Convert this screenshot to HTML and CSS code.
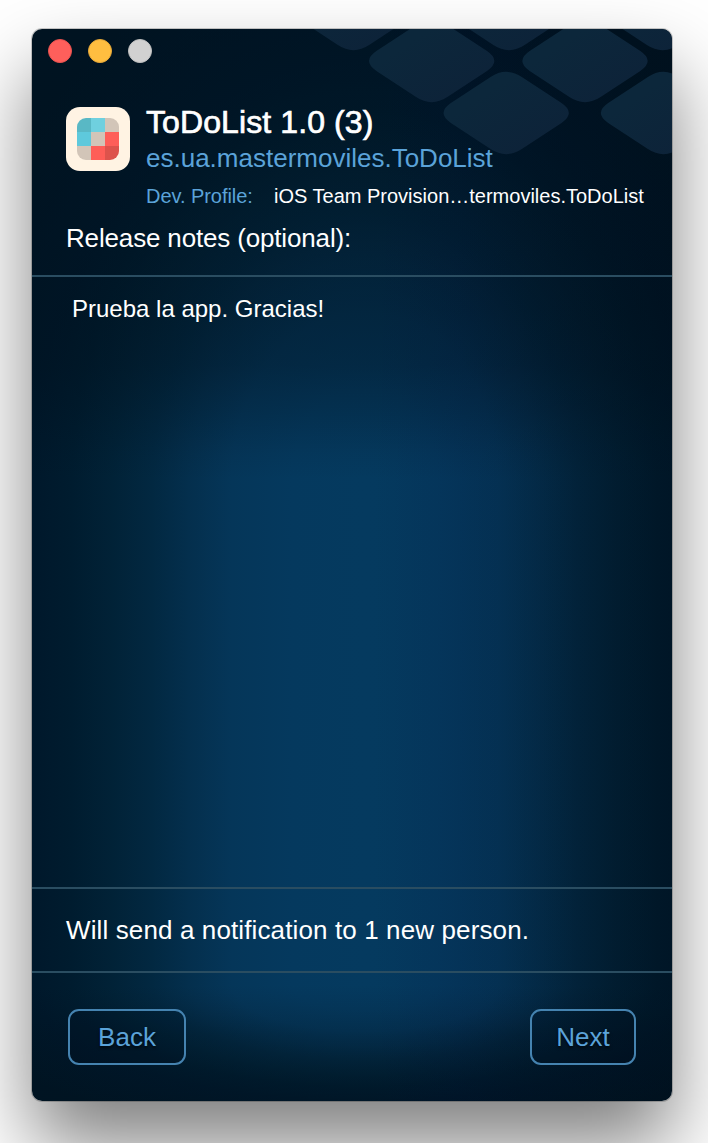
FILE: index.html
```html
<!DOCTYPE html>
<html lang="en">
<head>
<meta charset="utf-8">
<title>ToDoList 1.0 (3)</title>
<link rel="stylesheet" href="styles.css">
</head>
<body>
<main class="window">
  <svg class="pattern" width="370" height="130" viewBox="-40 0 370 130" aria-hidden="true">
    <defs>
      <linearGradient id="tile-fill" x1="0" y1="0" x2="1" y2="1">
        <stop offset="0.3" stop-color="#0c273b"/>
        <stop offset="0.8" stop-color="#0d2339"/>
      </linearGradient>
      <path id="tile" d="M-55.3 -9.9L-15.6 -36Q0 -46.3 15.6 -36L55.3 -9.9Q70 0 55.3 9.9L15.6 36Q0 46.3 -15.6 36L-55.3 9.9Q-70 0 -55.3 -9.9Z" fill="url(#tile-fill)"/>
    </defs>
    <use href="#tile" x="11.5" y="-20"/>
    <use href="#tile" x="167" y="-20"/>
    <use href="#tile" x="320.5" y="-20"/>
    <use href="#tile" x="89.7" y="32"/>
    <use href="#tile" x="243" y="32"/>
    <use href="#tile" x="164.2" y="84"/>
    <use href="#tile" x="321.5" y="84"/>
  </svg>

  <div class="titlebar">
    <span class="light light-close"></span>
    <span class="light light-minimize"></span>
    <span class="light light-zoom"></span>
  </div>

  <header class="header">
    <div class="app">
      <div class="app-icon">
        <div class="app-grid">
          <i class="teal-dark"></i><i class="teal-light"></i><i class="sand"></i>
          <i class="teal"></i><i class="sand"></i><i class="red"></i>
          <i class="sand"></i><i class="red"></i><i class="red-dark"></i>
        </div>
      </div>
      <div class="app-info">
        <h1 class="app-title">ToDoList 1.0 (3)</h1>
        <p class="bundle">es.ua.mastermoviles.ToDoList</p>
        <p class="profile"><span class="profile-label">Dev. Profile:</span><span class="profile-value">iOS Team Provision…termoviles.ToDoList</span></p>
      </div>
    </div>
    <h2 class="notes-label">Release notes (optional):</h2>
  </header>

  <section class="notes">Prueba la app. Gracias!</section>
  <p class="status">Will send a notification to 1 new person.</p>

  <footer class="footer">
    <button class="button button-back">Back</button>
    <button class="button button-next">Next</button>
  </footer>
</main>
</body>
</html>
```

FILE: styles.css
```css
* {
  box-sizing: border-box;
  margin: 0;
  padding: 0;
}

body {
  height: 1143px;
  padding: 29px 36px 42px 32px;
  overflow: hidden;
  background: #fff;
  color: #fff;
  font-family: "Liberation Sans", Arial, sans-serif;
}

/* The glow is an ellipse cut at its centre line, with a stretched middle band */
.window {
  --glow: #053a5f 0%, #05395e 22%, #053659 40%, #042f4d 53%, #022841 64%, #012237 76%, #001c2f 88%, #00182b 100%, #001524 130%;
  position: relative;
  display: flex;
  flex-direction: column;
  width: 640px;
  height: 1072px;
  border-radius: 10px;
  background:
    linear-gradient(90deg, rgba(0, 8, 50, 0) 340px, rgba(0, 8, 50, 0.1) 430px, rgba(0, 10, 30, 0.16) 500px, rgba(0, 12, 24, 0.32) 640px),
    linear-gradient(0deg, rgba(0, 16, 28, 0) 0, rgba(0, 16, 28, 0.06) 25px, rgba(0, 16, 28, 0.23) 70px, rgba(0, 16, 28, 0.38) 115px, rgba(0, 16, 28, 0.43) 170px, rgba(0, 16, 28, 0.4) 451px) 0 0 / 100% 451px no-repeat,
    linear-gradient(180deg, rgba(0, 16, 28, 0) 0, rgba(0, 16, 28, 0.2) 50px, rgba(0, 16, 28, 0.25) 116px) 0 956px / 100% 116px no-repeat,
    radial-gradient(333px 420px at 333px 451px, var(--glow)) 0 0 / 100% 451px no-repeat,
    radial-gradient(333px 116px at 333px 0, var(--glow)) 0 956px / 100% 116px no-repeat,
    radial-gradient(333px 100000px at 333px 50%, var(--glow));
  box-shadow: 0 0 0 1px rgba(0, 0, 0, 0.2), 0 44px 80px rgba(0, 0, 0, 0.5);
}

/* Decorative tiles behind the header */
.pattern {
  position: absolute;
  top: 0;
  right: 0;
  border-top-right-radius: 10px;
}

.titlebar {
  position: relative;
  display: flex;
  gap: 16px;
  height: 75px;
  padding: 10px 16px;
}

.light {
  width: 24px;
  height: 24px;
  border-radius: 50%;
}

.light-close { background: #fe5f5b; border: 1px solid #e9524f; }
.light-minimize { background: #ffbe40; border: 1px solid #e6a838; }
.light-zoom { background: #d1d1d1; border: 1px solid #bfbfbf; }

.header {
  position: relative;
  height: 173px;
  border-bottom: 2px solid #2a4d61;
}

.app {
  display: flex;
  gap: 16px;
  padding-left: 34px;
}

.app-icon {
  width: 64px;
  height: 64px;
  margin-top: 3px;
  padding: 11px;
  border-radius: 14px;
  background: #fff3e3;
}

.app-grid {
  display: grid;
  grid-template-columns: repeat(3, 14px);
  grid-template-rows: repeat(3, 14px);
  width: 42px;
  height: 42px;
  overflow: hidden;
  border-radius: 9px;
}

.teal-dark { background: #59b8c5; }
.teal-light { background: #6fd0df; }
.teal { background: #5ec9dc; }
.sand { background: #d2c5b8; }
.red { background: #fe5e58; }
.red-dark { background: #dd534c; }

.app-title {
  font-size: 32px;
  font-weight: 400;
  line-height: 36px;
  letter-spacing: 0.1px;
  -webkit-text-stroke: 0.7px #fff;
}

.bundle {
  color: #5ba3d9;
  font-size: 26px;
  line-height: 36px;
}

.profile {
  display: flex;
  margin-top: 5px;
  font-size: 20px;
  line-height: 30px;
  white-space: nowrap;
}

.profile-label {
  width: 128px;
  color: #5ba3d9;
  letter-spacing: -0.05px;
}

.notes-label {
  padding: 11px 0 0 34px;
  font-size: 26px;
  font-weight: 400;
  line-height: 32px;
  letter-spacing: -0.16px;
}

.notes {
  flex: 1;
  padding: 17px 40px;
  font-size: 24px;
  line-height: 30px;
}

.status {
  height: 86px;
  padding-left: 34px;
  border-top: 2px solid #2a4d61;
  border-bottom: 2px solid #2a4d61;
  font-size: 26px;
  line-height: 82px;
  letter-spacing: 0.12px;
}

.footer {
  display: flex;
  justify-content: space-between;
  height: 128px;
  padding: 36px;
}

.button {
  height: 56px;
  border: 2px solid #4583b0;
  border-radius: 11px;
  background: rgba(0, 12, 24, 0.12);
  color: #5ba3d9;
  font: 26px/52px "Liberation Sans", Arial, sans-serif;
  text-shadow: 0 2px 3px rgba(0, 0, 0, 0.7);
}

.button-back { width: 118px; }
.button-next { width: 106px; }
```
